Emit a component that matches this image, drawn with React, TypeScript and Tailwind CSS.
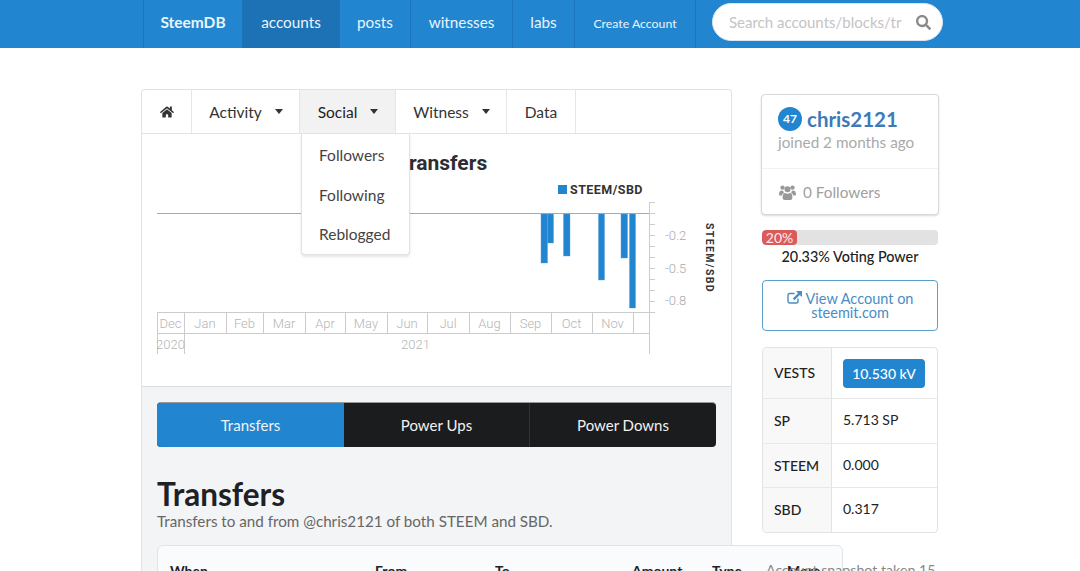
import React from "react";
import { FaHome, FaSearch } from "react-icons/fa";

const font = { lato: "font-['Lato','Liberation_Sans',sans-serif]" };

function Caret() {
  return (
    <svg width="8" height="5" viewBox="0 0 8 5" className="mb-[4px] ml-[13px] fill-[#333]">
      <path d="M0 0H8L4 5Z" />
    </svg>
  );
}

function UsersIcon() {
  return (
    <svg width="17" height="15" viewBox="0 0 17 15" className="fill-[#999]">
      <circle cx="3.5" cy="2.6" r="2.2" />
      <circle cx="13.5" cy="2.6" r="2.2" />
      <circle cx="8.5" cy="4.2" r="3" />
      <path d="M0 9.5C0 6.8 1.2 5.6 2.6 5.6C3.4 5.6 3.9 6 4.4 6.3C4.4 7 4.8 7.6 5 8C3.6 8.4 3 9.6 2.9 10.6H1C.4 10.6 0 10.2 0 9.5Z" />
      <path d="M17 9.5C17 6.8 15.8 5.6 14.4 5.6C13.6 5.6 13.1 6 12.6 6.3C12.6 7 12.2 7.6 12 8C13.4 8.4 14 9.6 14.1 10.6H16C16.6 10.6 17 10.2 17 9.5Z" />
      <path d="M3.6 12.4C3.6 9.6 4.4 8 6 8C6.6 8.4 7.5 8.8 8.5 8.8C9.5 8.8 10.4 8.4 11 8C12.6 8 13.4 9.6 13.4 12.4C13.4 13.9 12.6 15 11.2 15H5.8C4.4 15 3.6 13.9 3.6 12.4Z" />
    </svg>
  );
}

function ExternalIcon() {
  return (
    <svg width="15" height="13" viewBox="0 0 15 13" fill="none" className="mr-[4px] mb-[2px]">
      <path d="M11 7.5V10.2C11 11.2 10.2 12 9.2 12H2.8C1.8 12 1 11.2 1 10.2V4.3C1 3.3 1.8 2.5 2.8 2.5H7.5" stroke="currentColor" strokeWidth="1.4" />
      <path d="M9 0H15V6L12.8 3.9L7.4 9.2L5.8 7.6L11.1 2.2Z" fill="currentColor" />
    </svg>
  );
}

function NavItem({ w, children, className = "" }: { w: string; children: React.ReactNode; className?: string }) {
  return (
    <div className={`flex h-12 items-center justify-center border-r border-[#1b75bb] pb-[3px] ${w} ${className}`}>{children}</div>
  );
}

function Tab({ w, label, caret, active }: { w: string; label: React.ReactNode; caret?: boolean; active?: boolean }) {
  return (
    <div className={`flex h-full items-center justify-center border-r border-[#e6e6e6] pt-[3px] ${caret ? "pl-[1px]" : ""} ${w} ${active ? "bg-[#f2f2f2] text-[#222]" : "text-[#333]"}`}>
      {label}
      {caret && <Caret />}
    </div>
  );
}

const months: [string, number, number][] = [
  ["Dec", 157, 184], ["Jan", 184, 226], ["Feb", 226, 263], ["Mar", 263, 305], ["Apr", 305, 345],
  ["May", 345, 387], ["Jun", 387, 427], ["Jul", 427, 469], ["Aug", 469, 510], ["Sep", 510, 551],
  ["Oct", 551, 592], ["Nov", 592, 633],
];
const bars: [number, number, number][] = [
  [541, 6.5, 263], [547.5, 6, 243], [563.5, 6.5, 256], [598.5, 6, 280], [621, 6.5, 258], [629.5, 6, 308],
];

function Chart() {
  const ox = 142;
  const oy = 180;
  return (
    <svg width="589" height="185" viewBox={`${ox} ${oy} 589 185`} className="block" style={{ fontFamily: "Roboto, sans-serif" }}>
      <rect x="558" y="185" width="9" height="9" fill="#2185d0" />
      <text x="570" y="194" fontSize="12.5" fontWeight="700" letterSpacing="0.45" fill="#333">STEEM/SBD</text>
      <line x1="157" x2="649" y1="213.5" y2="213.5" stroke="#aaa" strokeWidth="1.2" />
      {bars.map(([x, w, b]) => (
        <rect key={x} x={x} y="214" width={w} height={b - 214} fill="#2185d0" stroke="#5a9fd8" strokeWidth="0.4" />
      ))}
      <line x1="649.5" x2="649.5" y1="202" y2="354" stroke="#ccc" />
      {[202, 213, 224, 235, 246, 257, 268, 279, 290, 301, 312].map((y) => (
        <line key={y} x1="649" x2="655" y1={y + 0.5} y2={y + 0.5} stroke="#ccc" />
      ))}
      {[["-0.2", 239.5], ["-0.5", 272.5], ["-0.8", 305]].map(([t, y]) => (
        <text key={t} x="665" y={y} fontSize="13" fontWeight="300" fill="#aaa">{t}</text>
      ))}
      <text transform="translate(706 223) rotate(90)" fontSize="10.5" fontWeight="700" letterSpacing="1.35" fill="#333">STEEM/SBD</text>
      <line x1="157" x2="649" y1="312.5" y2="312.5" stroke="#ccc" />
      <line x1="157" x2="649" y1="333.5" y2="333.5" stroke="#ccc" />
      <line x1="157.5" x2="157.5" y1="312" y2="354" stroke="#ccc" />
      <line x1="184.5" x2="184.5" y1="312" y2="354" stroke="#ccc" />
      {months.map(([m, a, b]) => (
        <g key={m}>
          <line x1={b + 0.5} x2={b + 0.5} y1="312" y2="333" stroke="#ccc" />
          <text x={(a + b) / 2} y="328" textAnchor="middle" fontSize="13" fontWeight="300" fill="#b5b5b5">{m}</text>
        </g>
      ))}
      <text x="170.5" y="349" textAnchor="middle" fontSize="13" fontWeight="300" fill="#b5b5b5">2020</text>
      <text x="415.5" y="349" textAnchor="middle" fontSize="13" fontWeight="300" fill="#b5b5b5">2021</text>
    </svg>
  );
}

function StatRow({ label, h, children, last }: { label: string; h: string; children: React.ReactNode; last?: boolean }) {
  return (
    <div className={`flex ${h} ${last ? "" : "border-b border-[#e8e8e8]"}`}>
      <div className="flex w-[69px] items-center border-r border-[#e3e3e3] bg-[#f8f8f8] pb-[1px] pl-[11px] font-medium text-[#222]">{label}</div>
      <div className="flex flex-1 items-center pb-[3px] pl-[11px] text-[#222]">{children}</div>
    </div>
  );
}

export default function App() {
  return (
    <div className={`h-[571px] w-[1080px] overflow-hidden bg-white ${font.lato}`}>
      <header className="flex h-12 bg-[#2185d0] pl-[143px] text-[15.3px] text-[#eaf4fb]">
        <NavItem w="w-[100px]" className="border-l font-bold"><span className="text-[15.5px]">SteemDB</span></NavItem>
        <NavItem w="w-[97px]" className="bg-[#1c72b5]"><span>accounts</span></NavItem>
        <NavItem w="w-[71px]"><span>posts</span></NavItem>
        <NavItem w="w-[102px]"><span>witnesses</span></NavItem>
        <NavItem w="w-[62px]"><span>labs</span></NavItem>
        <NavItem w="w-[121px]"><span className="mt-[3px] text-[12.3px]">Create Account</span></NavItem>
        <div className="mt-[3px] ml-[16px] flex h-[38px] w-[231px] items-center rounded-full border border-[#d9e6f2] bg-white pl-4 pr-[11px]">
          <span className="mt-[1px] w-[173px] overflow-hidden whitespace-nowrap text-[15px] text-[#c4c4c4]">Search accounts/blocks/tr</span>
          <FaSearch className="ml-auto text-[15px] text-[#8a8a8a]" />
        </div>
      </header>

      <main className="flex items-start pl-[141px] pt-[41px]">
        <section className="w-[591px] shrink-0 rounded-t border border-b-0 border-[#e3e3e3] bg-[#f3f4f5]">
          <nav className="flex h-[44px] items-center rounded-t border-b border-[#e3e3e3] bg-white text-[15.5px]">
            <Tab w="w-[50px]" label={<FaHome className="mb-[3px] text-[14px] text-[#333]" />} />
            <Tab w="w-[108px]" label="Activity" caret />
            <Tab w="w-[96px]" label="Social" caret active />
            <Tab w="w-[111px]" label="Witness" caret />
            <Tab w="w-[69px]" label="Data" />
          </nav>
          <div className="relative h-[253px] border-b border-[#dcdcdc] bg-white">
            <div className="pl-[182px] pt-[16px] text-[21px] font-bold leading-[26px] text-[#2c2c34] font-['Roboto',sans-serif]">STEEM Transfers</div>
            <div className="absolute left-0 top-[46px]"><Chart /></div>
            <div className="absolute left-[158.5px] top-0 flex h-[121px] w-[109px] flex-col rounded-b border border-t-0 border-[#e3e3e3] bg-white pl-[17.5px] pt-[2px] text-[15.5px] leading-[39.5px] text-[#444] shadow-[0_2px_3px_rgba(0,0,0,0.1)]">
              <span>Followers</span>
              <span>Following</span>
              <span>Reblogged</span>
            </div>
          </div>
          <div className="px-[15px] pt-[15px]">
            <div className="flex h-[45px] overflow-hidden rounded border-t border-[#999] bg-[#1b1c1d] text-[15px] text-[#f2f2f2]">
              <div className="flex w-[187px] items-center justify-center bg-[#2185d0]">Transfers</div>
              <div className="flex w-[186px] items-center justify-center border-r border-[#333]">Power Ups</div>
              <div className="flex flex-1 items-center justify-center">Power Downs</div>
            </div>
            <h1 className="mt-[27px] text-[31.5px] font-bold leading-[40px] text-[#1e2125]">Transfers</h1>
            <p className="-mt-[1px] text-[15.2px] leading-[16px] text-[#666]">Transfers to and from @chris2121 of both STEEM and SBD.</p>
            <div className="mt-[16px] w-[686px] rounded-t-md border border-[#e3e3e3] bg-[#fafbfc] pt-[16px] text-[14px] font-bold leading-[18px] text-[#222]">
              <div className="flex">
                <span className="ml-[12px] w-[205px]">When</span>
                <span className="w-[120px]">From</span>
                <span className="w-[137px]">To</span>
                <span className="w-[80px]">Amount</span>
                <span className="w-[75px]">Type</span>
                <span>More</span>
              </div>
            </div>
          </div>
        </section>

        <aside className="relative ml-[29px] mt-[5px] w-[178px] shrink-0">
          <div className="h-[121px] rounded border border-[#d9d9d9] bg-white shadow-[0_1px_2px_rgba(0,0,0,0.15)]">
            <div className="h-[74px] border-b border-[#f2f2f2] pl-[16px] pt-[11px]">
              <div className="flex items-center">
                <span className="flex h-6 w-6 items-center justify-center rounded-full bg-[#2185d0] text-[12px] font-bold text-white">47</span>
                <span className="ml-[5px] text-[20.5px] font-bold leading-[26px] text-[#3d7ab8]">chris2121</span>
              </div>
              <div className="text-[15.3px] leading-[20px] text-[#aaa]">joined 2 months ago</div>
            </div>
            <div className="flex h-[46px] items-center pl-[17px] text-[15.3px] text-[#a0a0a0]">
              <UsersIcon />
              <span className="ml-[7px]">0 Followers</span>
            </div>
          </div>
          <div className="mx-[1px] mt-[15px] h-[15px] overflow-hidden rounded bg-[#e2e2e2]">
            <div className="flex h-full w-[35px] items-center justify-center rounded bg-[#db5b5b] text-[14px] text-[#fbeaea]">20%</div>
          </div>
          <div className="mt-[3px] text-center text-[14.4px] font-medium leading-[18px] text-[#222]">20.33% Voting Power</div>
          <div className="mx-[1px] mt-[14px] flex h-[51px] flex-col items-center justify-center rounded border border-[#5a9fc9] text-[14.5px] leading-[14px] text-[#4a8cc4]">
            <span className="flex items-center"><ExternalIcon />View Account on</span>
            <span>steemit.com</span>
          </div>
          <div className="mx-[1px] mt-[16px] overflow-hidden rounded border border-[#e3e3e3] text-[14px]">
            <StatRow label="VESTS" h="h-[51px]">
              <span className="mt-[3px] flex h-[29px] w-[82px] items-center justify-center rounded bg-[#2185d0] font-medium text-white">10.530 kV</span>
            </StatRow>
            <StatRow label="SP" h="h-[45px]">5.713 SP</StatRow>
            <StatRow label="STEEM" h="h-[44px]">0.000</StatRow>
            <StatRow label="SBD" h="h-[44px]" last>0.317</StatRow>
          </div>
          <div className="mt-[26px] whitespace-nowrap pl-[5px] text-[14.2px] text-[#888]">Account snapshot taken 15</div>
        </aside>
      </main>
    </div>
  );
}
